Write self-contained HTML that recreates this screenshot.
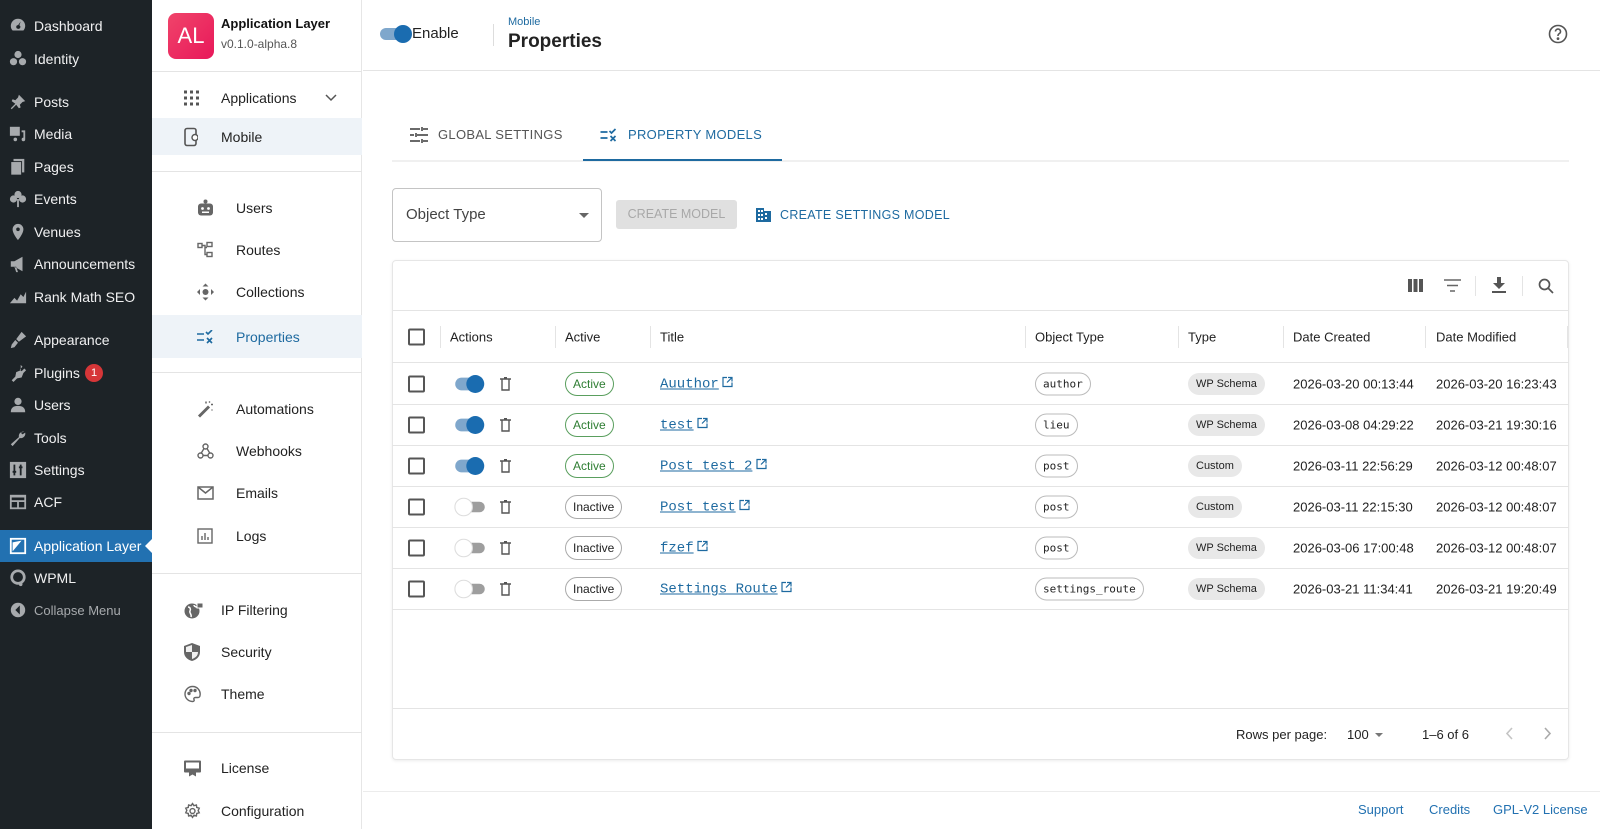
<!DOCTYPE html>
<html><head><meta charset="utf-8">
<style>
*{box-sizing:border-box;margin:0;padding:0}
body{width:1600px;height:829px;overflow:hidden;font-family:"Liberation Sans",sans-serif;background:#fff;position:relative;color:#1f1f1f}
.abs{position:absolute}
#wp{left:0;top:0;width:152px;height:829px;background:#1d2327}
.wi{position:absolute;left:0;width:152px;height:32px;display:flex;align-items:center;color:#f0f0f1;font-size:14px}
.wi .ic{position:absolute;left:9px;width:18px;height:18px}
.wi span.t{position:absolute;left:34px}
#app{left:152px;top:0;width:210px;height:829px;background:#fff;border-right:1px solid #e6e6e6}
.hr{position:absolute;left:152px;width:210px;height:1px;background:#e4e4e4}
.ai{position:absolute;left:152px;width:210px;height:42px;font-size:14px;color:#222}
.ai .t{position:absolute;top:50%;transform:translateY(-50%)}
.ai svg{position:absolute;top:50%;transform:translateY(-50%)}
.sel{background:#eef3f8}
.sel .t{color:#1e6aa0}
.cb{position:absolute;width:17px;height:17px;border:2px solid #555;border-radius:2px}
.row{position:absolute;left:392px;width:1177px;height:41px;border-bottom:1px solid #e4e4e4;font-size:13px}
.row>*{position:absolute;top:50%;transform:translateY(-50%)}
.chipA{border:1px solid #5a9f5e;color:#2e7d32;border-radius:12px;padding:4px 7px;font-size:12px}
.chipI{border:1px solid #aaa;color:#222;border-radius:12px;padding:4px 7px;font-size:12px}
.lnk{font-family:"Liberation Mono",monospace;font-size:14px;color:#1e6aa0;text-decoration:underline}
.mono{font-family:"DejaVu Sans Mono","Liberation Mono",monospace;font-size:11px;border:1px solid #bbb;border-radius:12px;padding:4px 7px;color:#222}
.typ{background:#e8e8e8;border-radius:12px;padding:5px 8px;font-size:11px;color:#222}
.tg{width:32px;height:19px}
.th{position:absolute;font-size:13px;color:#222;top:50%;transform:translateY(-50%)}
.cd{position:absolute;width:1px;height:22px;background:#e4e4e4;top:50%;transform:translateY(-50%)}
</style></head><body>
<div id="wp" class="abs"></div>
<div class="wi" style="top:10px"><svg class="ic" viewBox="0 0 20 20"><path d="M10 2a8 8 0 0 0-8 8c0 2 .7 3.7 2 5h12a8 8 0 0 0 2-5 8 8 0 0 0-8-8zm0 11a2 2 0 1 1 .1-4L13 5l-1.5 4.3A2 2 0 0 1 10 13z" fill="#a7aaad"/></svg><span class="t">Dashboard</span></div>
<div class="wi" style="top:43px"><svg class="ic" viewBox="0 0 20 20"><circle cx="10" cy="5" r="4" fill="#a7aaad"/><circle cx="5" cy="13" r="4" fill="#a7aaad"/><circle cx="15" cy="13" r="4" fill="#a7aaad"/></svg><span class="t">Identity</span></div>
<div class="wi" style="top:86px"><svg class="ic" viewBox="0 0 20 20"><path d="M11 2l7 7-3 1-3 3 1 3-2 1-3-4-5 5-1-1 5-5-4-3 1-2 3 1 3-3z" fill="#a7aaad"/></svg><span class="t">Posts</span></div>
<div class="wi" style="top:118px"><svg class="ic" viewBox="0 0 20 20"><rect x="1" y="2" width="11" height="10" fill="#a7aaad"/><path d="M14 6h4v10a2 2 0 1 1-2-2V8h-2z" fill="#a7aaad"/><circle cx="7" cy="16" r="2" fill="#a7aaad"/></svg><span class="t">Media</span></div>
<div class="wi" style="top:151px"><svg class="ic" viewBox="0 0 20 20"><rect x="5" y="1" width="12" height="15" fill="#a7aaad"/><rect x="2" y="4" width="12" height="15" fill="#a7aaad" stroke="#1d2327"/></svg><span class="t">Pages</span></div>
<div class="wi" style="top:183px"><svg class="ic" viewBox="0 0 20 20"><circle cx="10" cy="5" r="4" fill="#a7aaad"/><circle cx="5" cy="10" r="4" fill="#a7aaad"/><circle cx="15" cy="10" r="4" fill="#a7aaad"/><rect x="9" y="10" width="2" height="9" fill="#a7aaad"/></svg><span class="t">Events</span></div>
<div class="wi" style="top:216px"><svg class="ic" viewBox="0 0 20 20"><path d="M10 1a6 6 0 0 0-6 6c0 5 6 12 6 12s6-7 6-12a6 6 0 0 0-6-6zm0 8a2 2 0 1 1 0-4 2 2 0 0 1 0 4z" fill="#a7aaad"/></svg><span class="t">Venues</span></div>
<div class="wi" style="top:248px"><svg class="ic" viewBox="0 0 20 20"><path d="M2 7h4l9-5v16l-9-5H2zm4 6 2 6h2l-2-6z" fill="#a7aaad"/></svg><span class="t">Announcements</span></div>
<div class="wi" style="top:281px"><svg class="ic" viewBox="0 0 20 20"><path d="M1 17l5-6 3 3 4-7 3 3 3-6v13z" fill="#a7aaad"/></svg><span class="t">Rank Math SEO</span></div>
<div class="wi" style="top:324px"><svg class="ic" viewBox="0 0 20 20"><path d="M14 1l5 5-8 6-3-3zM7 10l3 3-4 5-4 1 1-4z" fill="#a7aaad"/></svg><span class="t">Appearance</span></div>
<div class="wi" style="top:357px"><svg class="ic" viewBox="0 0 20 20"><path d="M13 1l2 2-3 3 2 2 3-3 2 2-3 3-2 5-5 1-4 4-2-2 4-4 1-5 5-2z" fill="#a7aaad"/></svg><span class="t">Plugins</span><span class="abs" style="left:85px;top:7px;width:18px;height:18px;border-radius:9px;background:#d63638;color:#fff;font-size:11px;text-align:center;line-height:18px">1</span></div>
<div class="wi" style="top:389px"><svg class="ic" viewBox="0 0 20 20"><circle cx="10" cy="6" r="4" fill="#a7aaad"/><path d="M2 18c0-5 3-7 8-7s8 2 8 7z" fill="#a7aaad"/></svg><span class="t">Users</span></div>
<div class="wi" style="top:422px"><svg class="ic" viewBox="0 0 20 20"><path d="M17 3a5 5 0 0 0-6 6l-9 8 2 2 8-9a5 5 0 0 0 6-6l-3 2-2-2z" fill="#a7aaad"/></svg><span class="t">Tools</span></div>
<div class="wi" style="top:454px"><svg class="ic" viewBox="0 0 20 20"><rect x="1" y="1" width="18" height="18" fill="#a7aaad"/><path d="M6 4v12M13 4v12M4 12h4M11 7h4" stroke="#1d2327" stroke-width="2"/></svg><span class="t">Settings</span></div>
<div class="wi" style="top:486px"><svg class="ic" viewBox="0 0 20 20"><rect x="1" y="2" width="18" height="16" fill="#a7aaad"/><rect x="3" y="5" width="14" height="3" fill="#1d2327"/><rect x="3" y="10" width="6" height="6" fill="#1d2327"/><rect x="11" y="10" width="6" height="6" fill="#1d2327"/></svg><span class="t">ACF</span></div>
<div class="wi" style="top:530px;background:#2271b1;height:32px"><svg class="ic" viewBox="0 0 20 20"><rect x="2" y="2" width="16" height="16" fill="none" stroke="#fff" stroke-width="2"/><path d="M4 16V6l10-2z" fill="#fff"/></svg><span class="t" style="color:#fff">Application Layer</span><span class="abs" style="right:0;top:9px;border:7px solid transparent;border-right-color:#fff"></span></div>
<div class="wi" style="top:562px"><svg class="ic" viewBox="0 0 20 20"><circle cx="10" cy="9" r="7" fill="none" stroke="#a7aaad" stroke-width="3"/><circle cx="13" cy="17" r="2" fill="#a7aaad"/></svg><span class="t">WPML</span></div>
<div class="wi" style="top:594px;color:#a7aaad;font-size:13px"><svg class="ic" viewBox="0 0 20 20"><circle cx="10" cy="10" r="8" fill="#a7aaad"/><path d="M12 5l-5 5 5 5z" fill="#1d2327"/></svg><span class="t">Collapse Menu</span></div>

<div id="app" class="abs"></div>
<div class="abs" style="left:168px;top:13px;width:46px;height:46px;border-radius:8px;background:linear-gradient(135deg,#f0446a,#e8185a);color:#fff;font-size:22px;display:flex;align-items:center;justify-content:center">AL</div>
<div class="abs" style="left:221px;top:16px;font-size:13px;font-weight:bold;color:#111">Application Layer</div>
<div class="abs" style="left:221px;top:37px;font-size:12px;color:#555">v0.1.0-alpha.8</div>
<div class="hr" style="top:71px"></div>
<div class="ai" style="top:77px"><svg style="left:32px" width="15" height="15" viewBox="0 0 15 15" fill="#555"><rect x="0" y="0" width="3" height="3"/><rect x="6" y="0" width="3" height="3"/><rect x="12" y="0" width="3" height="3"/><rect x="0" y="6" width="3" height="3"/><rect x="6" y="6" width="3" height="3"/><rect x="12" y="6" width="3" height="3"/><rect x="0" y="12" width="3" height="3"/><rect x="6" y="12" width="3" height="3"/><rect x="12" y="12" width="3" height="3"/></svg><span class="t" style="left:69px">Applications</span><svg style="left:173px" width="12" height="8" viewBox="0 0 12 8"><path d="M1 1l5 5 5-5" stroke="#555" stroke-width="1.5" fill="none"/></svg></div>
<div class="ai sel" style="top:118px;height:37px"><svg style="left:32px" width="14" height="19" viewBox="0 0 14 19"><rect x="1" y="1" width="11" height="17" rx="2" fill="none" stroke="#555" stroke-width="1.6"/><circle cx="11" cy="10" r="3" fill="#fff" stroke="#555" stroke-width="1.4"/></svg><span class="t" style="left:69px;color:#222">Mobile</span></div>
<div class="hr" style="top:171px"></div>
<div class="ai" style="top:187px"><svg style="left:45px" width="17" height="17" viewBox="0 0 17 17"><rect x="1" y="4" width="15" height="12" rx="3" fill="#666"/><circle cx="8.5" cy="2" r="2" fill="#666"/><circle cx="5.5" cy="9" r="1.4" fill="#fff"/><circle cx="11.5" cy="9" r="1.4" fill="#fff"/><rect x="5" y="12" width="7" height="1.5" fill="#fff"/></svg><span class="t" style="left:84px">Users</span></div>
<div class="ai" style="top:229px"><svg style="left:45px" width="17" height="17" viewBox="0 0 17 17" fill="none" stroke="#666" stroke-width="1.4"><rect x="1" y="2" width="4" height="4"/><rect x="10" y="1" width="5" height="4"/><rect x="10" y="11" width="5" height="4"/><path d="M5 4h3v9h2M8 6h2"/></svg><span class="t" style="left:84px">Routes</span></div>
<div class="ai" style="top:271px"><svg style="left:45px" width="17" height="17" viewBox="0 0 17 17" fill="#666"><path d="M8.5 0l3 3h-6zM8.5 17l3-3h-6zM0 8.5l3-3v6zM17 8.5l-3-3v6z"/><circle cx="8.5" cy="8.5" r="3"/></svg><span class="t" style="left:84px">Collections</span></div>
<div class="ai sel" style="top:315px;height:43px"><svg style="left:44px" width="18" height="14" viewBox="0 0 18 14" fill="none" stroke="#1e6aa0" stroke-width="1.6"><path d="M1 4h7M1 10h7M10 2l2 2 4-4M11 8l5 5M16 8l-5 5"/></svg><span class="t" style="left:84px">Properties</span></div>
<div class="hr" style="top:372px"></div>
<div class="ai" style="top:388px"><svg style="left:45px" width="17" height="17" viewBox="0 0 17 17" fill="none" stroke="#666" stroke-width="1.5"><path d="M2 15l9-9 1 1-9 9z"/><path d="M9 1v2M14 4h2M13 1l-1 1M15 9v1"/></svg><span class="t" style="left:84px">Automations</span></div>
<div class="ai" style="top:430px"><svg style="left:45px" width="17" height="17" viewBox="0 0 17 17" fill="none" stroke="#666" stroke-width="1.4"><circle cx="8.5" cy="4" r="2.5"/><circle cx="3.5" cy="13" r="2.5"/><circle cx="13.5" cy="13" r="2.5"/><path d="M7 6l-3 5M10 6l3 5M6 13h5"/></svg><span class="t" style="left:84px">Webhooks</span></div>
<div class="ai" style="top:472px"><svg style="left:45px" width="17" height="14" viewBox="0 0 17 14" fill="none" stroke="#666" stroke-width="1.5"><rect x="1" y="1" width="15" height="12"/><path d="M1 1l7.5 6L16 1"/></svg><span class="t" style="left:84px">Emails</span></div>
<div class="ai" style="top:515px"><svg style="left:45px" width="16" height="16" viewBox="0 0 16 16" fill="none" stroke="#666" stroke-width="1.4"><rect x="1" y="1" width="14" height="14"/><path d="M5 12V8M8 12V5M11 12V9"/></svg><span class="t" style="left:84px">Logs</span></div>
<div class="hr" style="top:573px"></div>
<div class="ai" style="top:589px"><svg style="left:32px" width="19" height="18" viewBox="0 0 19 18"><circle cx="8" cy="10" r="7.5" fill="#666"/><path d="M4 6c2 0 3 2 2 4s2 3 1 6M10 4c0 2 3 2 5 3" stroke="#fff" stroke-width="1.5" fill="none"/><rect x="13" y="2" width="6" height="5" fill="#666" stroke="#fff"/></svg><span class="t" style="left:69px">IP Filtering</span></div>
<div class="ai" style="top:631px"><svg style="left:32px" width="16" height="18" viewBox="0 0 16 18"><path d="M8 0L0 3v6c0 5 4 8 8 9 4-1 8-4 8-9V3z" fill="#666"/><path d="M8 2v7H2V4l6-2zM8 9h6c0 4-3 6-6 7z" fill="#fff" opacity=".9"/></svg><span class="t" style="left:69px">Security</span></div>
<div class="ai" style="top:673px"><svg style="left:32px" width="17" height="17" viewBox="0 0 17 17" fill="none" stroke="#666" stroke-width="1.4"><path d="M8.5 1a7.5 7.5 0 0 0 0 15c1.5 0 2-1 1.5-2s0-2 1.5-2H14a2 2 0 0 0 2-2A7.5 7.5 0 0 0 8.5 1z"/><circle cx="5" cy="8" r="1" fill="#666"/><circle cx="7" cy="5" r="1" fill="#666"/><circle cx="11" cy="5" r="1" fill="#666"/></svg><span class="t" style="left:69px">Theme</span></div>
<div class="hr" style="top:732px"></div>
<div class="ai" style="top:747px"><svg style="left:32px" width="17" height="17" viewBox="0 0 17 17" fill="#666"><rect x="0" y="1" width="17" height="12" rx="1"/><rect x="2" y="3" width="13" height="6" fill="#fff"/><path d="M5 13v4l3.5-2 3.5 2v-4z"/></svg><span class="t" style="left:69px">License</span></div>
<div class="ai" style="top:790px"><svg style="left:32px" width="17" height="17" viewBox="0 0 24 24" fill="none" stroke="#666" stroke-width="2"><circle cx="12" cy="12" r="3.5"/><path d="M12 1.5l2 3 3.5-1 .5 3.5 3.5 1-1.5 3.5 1.5 3-3.5 1-.5 3.5-3.5-1-2 3-2-3-3.5 1-.5-3.5-3.5-1 1.5-3.5-1.5-3 3.5-1 .5-3.5 3.5 1z"/></svg><span class="t" style="left:69px">Configuration</span></div>

<!-- header -->
<div class="abs" style="left:363px;top:70px;width:1237px;height:1px;background:#e4e4e4"></div>
<div class="abs" style="left:380px;top:28px;width:28px;height:12px;border-radius:6px;background:#7fa7cc"></div>
<div class="abs" style="left:394px;top:25px;width:18px;height:18px;border-radius:9px;background:#1a6cb0"></div>
<div class="abs" style="left:412px;top:25px;font-size:15px;color:#222">Enable</div>
<div class="abs" style="left:493px;top:24px;width:1px;height:22px;background:#ddd"></div>
<div class="abs" style="left:508px;top:16px;font-size:11px;color:#1e6aa0">Mobile</div>
<div class="abs" style="left:508px;top:31px;font-size:19px;font-weight:bold;color:#222">Properties</div>
<svg class="abs" style="left:1548px;top:24px" width="20" height="20" viewBox="0 0 20 20" fill="none" stroke="#555" stroke-width="1.6"><circle cx="10" cy="10" r="8.5"/><path d="M7.5 7.5a2.5 2.5 0 1 1 3.5 2.3c-.7.4-1 .9-1 1.7v.5"/><circle cx="10" cy="14.6" r=".6" fill="#555"/></svg>

<!-- tabs -->
<div class="abs" style="left:392px;top:160px;width:1177px;height:2px;background:#f0f0f0"></div>
<div class="abs" style="left:583px;top:159px;width:199px;height:2px;background:#1e6aa0"></div>
<svg class="abs" style="left:410px;top:127px" width="18" height="16" viewBox="0 0 18 16" fill="none" stroke="#555" stroke-width="1.7"><path d="M0 2h10M13 2h5M12 0v4M0 8h4M7 8h11M6 6v4M0 14h10M13 14h5M12 12v4"/></svg>
<div class="abs" style="left:438px;top:127px;font-size:13px;color:#555;letter-spacing:.3px">GLOBAL SETTINGS</div>
<svg class="abs" style="left:599px;top:128px" width="19" height="14" viewBox="0 0 18 14" fill="none" stroke="#1e6aa0" stroke-width="1.7"><path d="M1 4h7M1 10h7M10 3l2 2 4-4M11 8l5 5M16 8l-5 5"/></svg>
<div class="abs" style="left:628px;top:127px;font-size:13px;color:#1e6aa0;letter-spacing:.3px">PROPERTY MODELS</div>

<!-- controls -->
<div class="abs" style="left:392px;top:188px;width:210px;height:54px;border:1px solid #c4c4c4;border-radius:4px"></div>
<div class="abs" style="left:406px;top:206px;font-size:15px;color:#444">Object Type</div>
<div class="abs" style="left:579px;top:213px;border:5px solid transparent;border-top-color:#666"></div>
<div class="abs" style="left:616px;top:200px;width:121px;height:29px;background:#e0e0e0;border-radius:3px;color:#a8a8a8;font-size:12.5px;text-align:center;line-height:29px">CREATE MODEL</div>
<svg class="abs" style="left:756px;top:208px" width="15" height="14" viewBox="0 0 15 14" fill="#1e6aa0"><path d="M0 0h8v3h7v11H0zM2 2v2h2V2zm3 0v2h2V2zM2 6v2h2V6zm3 0v2h2V6zM2 10v2h2v-2zm3 0v2h2v-2zm4-5v2h2V5zm0 4v2h2V9z"/></svg>
<div class="abs" style="left:780px;top:208px;font-size:12.5px;color:#1e6aa0;letter-spacing:.3px">CREATE SETTINGS MODEL</div>

<!-- card -->
<div class="abs" style="left:392px;top:260px;width:1177px;height:500px;border:1px solid #e6e6e6;border-radius:4px;box-shadow:0 1px 3px rgba(0,0,0,.08)"></div>
<svg class="abs" style="left:1408px;top:279px" width="15" height="13" viewBox="0 0 15 13" fill="#555"><rect x="0" y="0" width="4" height="13"/><rect x="5.5" y="0" width="4" height="13"/><rect x="11" y="0" width="4" height="13"/></svg>
<svg class="abs" style="left:1444px;top:279px" width="17" height="13" viewBox="0 0 17 13" fill="none" stroke="#666" stroke-width="1.5"><path d="M0 1h17M3 6.5h11M6 12h5"/></svg>
<div class="abs" style="left:1475px;top:276px;width:1px;height:20px;background:#e4e4e4"></div>
<svg class="abs" style="left:1492px;top:277px" width="14" height="17" viewBox="0 0 14 17" fill="#555"><path d="M5 0h4v6h4l-6 6-6-6h4zM0 14h14v2H0z"/></svg>
<div class="abs" style="left:1522px;top:276px;width:1px;height:20px;background:#e4e4e4"></div>
<svg class="abs" style="left:1538px;top:278px" width="16" height="16" viewBox="0 0 16 16" fill="none" stroke="#555" stroke-width="1.7"><circle cx="6.5" cy="6.5" r="5"/><path d="M10 10l5 5"/></svg>
<div class="abs" style="left:393px;top:310px;width:1175px;height:1px;background:#e4e4e4"></div>

<div class="row" style="top:311px;height:52px">
<div class="cb" style="left:16px"></div><div class="cd" style="left:48px"></div>
<span class="th" style="left:58px">Actions</span><div class="cd" style="left:163px"></div>
<span class="th" style="left:173px">Active</span><div class="cd" style="left:258px"></div>
<span class="th" style="left:268px">Title</span><div class="cd" style="left:633px"></div>
<span class="th" style="left:643px">Object Type</span><div class="cd" style="left:786px"></div>
<span class="th" style="left:796px">Type</span><div class="cd" style="left:891px"></div>
<span class="th" style="left:901px">Date Created</span><div class="cd" style="left:1033px"></div>
<span class="th" style="left:1044px">Date Modified</span><div class="cd" style="left:1175px"></div>
</div>

<div class="row" style="top:364px"><div class="cb" style="left:16px"></div><svg class="tg" style="left:62px" viewBox="0 0 30 18"><rect x="1" y="3" width="26" height="12" rx="6" fill="#7fa7cc"/><circle cx="20" cy="9" r="8.5" fill="#1a6cb0"/></svg><svg style="left:108px" width="11" height="14" viewBox="0 0 11 14" fill="none" stroke="#555" stroke-width="1.4"><path d="M0 2h11M4 0.7h3M2 2v11h7V2"/></svg><span class="chipA" style="left:173px">Active</span><span style="left:268px"><span class="lnk">Auuthor</span> <svg width="11" height="11" viewBox="0 0 11 11" fill="none" stroke="#1e6aa0" stroke-width="1.2"><path d="M5 1H1v9h9V6M6 1h4v4M10 1L5 6"/></svg></span><span class="mono" style="left:643px">author</span><span class="typ" style="left:796px">WP Schema</span><span style="left:901px">2026-03-20 00:13:44</span><span style="left:1044px">2026-03-20 16:23:43</span></div>
<div class="row" style="top:405px"><div class="cb" style="left:16px"></div><svg class="tg" style="left:62px" viewBox="0 0 30 18"><rect x="1" y="3" width="26" height="12" rx="6" fill="#7fa7cc"/><circle cx="20" cy="9" r="8.5" fill="#1a6cb0"/></svg><svg style="left:108px" width="11" height="14" viewBox="0 0 11 14" fill="none" stroke="#555" stroke-width="1.4"><path d="M0 2h11M4 0.7h3M2 2v11h7V2"/></svg><span class="chipA" style="left:173px">Active</span><span style="left:268px"><span class="lnk">test</span> <svg width="11" height="11" viewBox="0 0 11 11" fill="none" stroke="#1e6aa0" stroke-width="1.2"><path d="M5 1H1v9h9V6M6 1h4v4M10 1L5 6"/></svg></span><span class="mono" style="left:643px">lieu</span><span class="typ" style="left:796px">WP Schema</span><span style="left:901px">2026-03-08 04:29:22</span><span style="left:1044px">2026-03-21 19:30:16</span></div>
<div class="row" style="top:446px"><div class="cb" style="left:16px"></div><svg class="tg" style="left:62px" viewBox="0 0 30 18"><rect x="1" y="3" width="26" height="12" rx="6" fill="#7fa7cc"/><circle cx="20" cy="9" r="8.5" fill="#1a6cb0"/></svg><svg style="left:108px" width="11" height="14" viewBox="0 0 11 14" fill="none" stroke="#555" stroke-width="1.4"><path d="M0 2h11M4 0.7h3M2 2v11h7V2"/></svg><span class="chipA" style="left:173px">Active</span><span style="left:268px"><span class="lnk">Post test 2</span> <svg width="11" height="11" viewBox="0 0 11 11" fill="none" stroke="#1e6aa0" stroke-width="1.2"><path d="M5 1H1v9h9V6M6 1h4v4M10 1L5 6"/></svg></span><span class="mono" style="left:643px">post</span><span class="typ" style="left:796px">Custom</span><span style="left:901px">2026-03-11 22:56:29</span><span style="left:1044px">2026-03-12 00:48:07</span></div>
<div class="row" style="top:487px"><div class="cb" style="left:16px"></div><svg class="tg" style="left:62px" viewBox="0 0 30 18"><rect x="3" y="4" width="26" height="10" rx="5" fill="#9e9e9e"/><circle cx="9" cy="9" r="8.3" fill="#fff" stroke="#ddd"/></svg><svg style="left:108px" width="11" height="14" viewBox="0 0 11 14" fill="none" stroke="#555" stroke-width="1.4"><path d="M0 2h11M4 0.7h3M2 2v11h7V2"/></svg><span class="chipI" style="left:173px">Inactive</span><span style="left:268px"><span class="lnk">Post test</span> <svg width="11" height="11" viewBox="0 0 11 11" fill="none" stroke="#1e6aa0" stroke-width="1.2"><path d="M5 1H1v9h9V6M6 1h4v4M10 1L5 6"/></svg></span><span class="mono" style="left:643px">post</span><span class="typ" style="left:796px">Custom</span><span style="left:901px">2026-03-11 22:15:30</span><span style="left:1044px">2026-03-12 00:48:07</span></div>
<div class="row" style="top:528px"><div class="cb" style="left:16px"></div><svg class="tg" style="left:62px" viewBox="0 0 30 18"><rect x="3" y="4" width="26" height="10" rx="5" fill="#9e9e9e"/><circle cx="9" cy="9" r="8.3" fill="#fff" stroke="#ddd"/></svg><svg style="left:108px" width="11" height="14" viewBox="0 0 11 14" fill="none" stroke="#555" stroke-width="1.4"><path d="M0 2h11M4 0.7h3M2 2v11h7V2"/></svg><span class="chipI" style="left:173px">Inactive</span><span style="left:268px"><span class="lnk">fzef</span> <svg width="11" height="11" viewBox="0 0 11 11" fill="none" stroke="#1e6aa0" stroke-width="1.2"><path d="M5 1H1v9h9V6M6 1h4v4M10 1L5 6"/></svg></span><span class="mono" style="left:643px">post</span><span class="typ" style="left:796px">WP Schema</span><span style="left:901px">2026-03-06 17:00:48</span><span style="left:1044px">2026-03-12 00:48:07</span></div>
<div class="row" style="top:569px"><div class="cb" style="left:16px"></div><svg class="tg" style="left:62px" viewBox="0 0 30 18"><rect x="3" y="4" width="26" height="10" rx="5" fill="#9e9e9e"/><circle cx="9" cy="9" r="8.3" fill="#fff" stroke="#ddd"/></svg><svg style="left:108px" width="11" height="14" viewBox="0 0 11 14" fill="none" stroke="#555" stroke-width="1.4"><path d="M0 2h11M4 0.7h3M2 2v11h7V2"/></svg><span class="chipI" style="left:173px">Inactive</span><span style="left:268px"><span class="lnk">Settings Route</span> <svg width="11" height="11" viewBox="0 0 11 11" fill="none" stroke="#1e6aa0" stroke-width="1.2"><path d="M5 1H1v9h9V6M6 1h4v4M10 1L5 6"/></svg></span><span class="mono" style="left:643px">settings_route</span><span class="typ" style="left:796px">WP Schema</span><span style="left:901px">2026-03-21 11:34:41</span><span style="left:1044px">2026-03-21 19:20:49</span></div>

<div class="abs" style="left:393px;top:708px;width:1175px;height:1px;background:#e4e4e4"></div>
<div class="abs" style="left:1236px;top:727px;font-size:13px;color:#222">Rows per page:</div>
<div class="abs" style="left:1347px;top:727px;font-size:13px;color:#222">100</div>
<div class="abs" style="left:1375px;top:733px;border:4.5px solid transparent;border-top-color:#777"></div>
<div class="abs" style="left:1422px;top:727px;font-size:13px;color:#222">1–6 of 6</div>
<svg class="abs" style="left:1505px;top:727px" width="8" height="13" viewBox="0 0 8 13"><path d="M7 1L2 6.5 7 12" stroke="#c4c4c4" stroke-width="1.6" fill="none"/></svg>
<svg class="abs" style="left:1544px;top:727px" width="8" height="13" viewBox="0 0 8 13"><path d="M1 1l5 5.5L1 12" stroke="#aaa" stroke-width="1.6" fill="none"/></svg>

<div class="abs" style="left:363px;top:791px;width:1237px;height:1px;background:#ececec"></div>
<div class="abs" style="left:1358px;top:802px;font-size:13px;color:#2271b1">Support</div>
<div class="abs" style="left:1429px;top:802px;font-size:13px;color:#2271b1">Credits</div>
<div class="abs" style="left:1493px;top:802px;font-size:13px;color:#2271b1">GPL-V2 License</div>
</body></html>
